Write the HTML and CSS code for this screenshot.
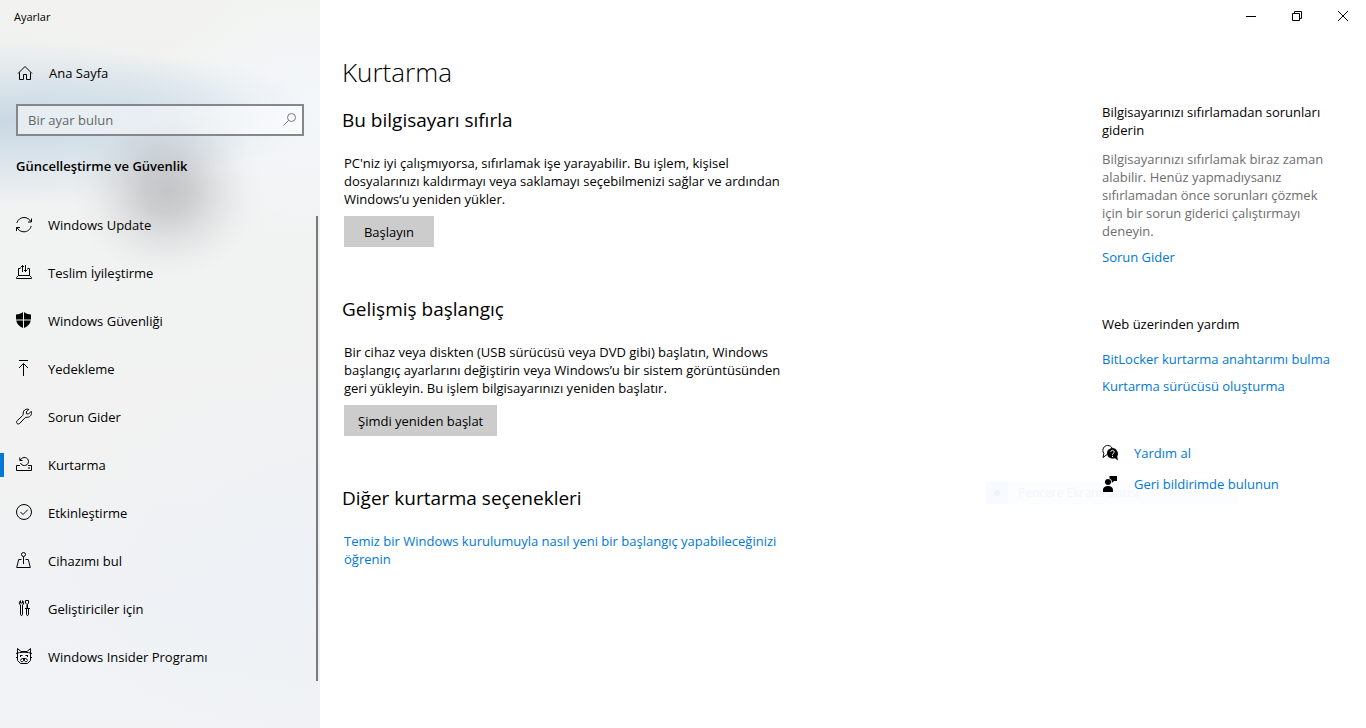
FILE: index.html
```html
<!DOCTYPE html>
<html lang="tr">

<head>
  <meta charset="utf-8">
  <meta name="viewport" content="width=device-width, initial-scale=1">
  <title>Ayarlar</title>
  <link rel="stylesheet" href="styles.css">
</head>

<body>
  <div class="sidebar">
    <div class="app-title">Ayarlar</div>

    <a class="home" href="#">
      <svg class="icon" viewBox="0 0 16 16"><path d="M1 8.5L8 1.5L15 8.5M2.5 7.5V14.5H6.5V9.5H9.5V14.5H13.5V7.5"/></svg>
      Ana Sayfa
    </a>

    <form class="search">
      <input type="text" id="search" aria-label="Bir ayar bulun" placeholder="Bir ayar bulun">
      <svg class="icon" viewBox="0 0 16 16"><circle cx="9.5" cy="5.5" r="4"/><path d="M6.5 8.5L1.5 13.5"/></svg>
    </form>

    <h2 class="group">Güncelleştirme ve Güvenlik</h2>

    <nav class="menu">
      <a href="#">
        <svg class="icon" viewBox="0 0 16 16"><path d="M0.8 6C2 2.3 4.800 0.500 8 0.500C11 0.500 13.600 2 15 4.800M15.500 1.500V5H12M15.200 9C14 13 11.200 14.800 8 14.800C5 14.800 2.400 13.300 1 10.500M0.500 14V10.500H4"/></svg>
        Windows Update
      </a>
      <a href="#">
        <svg class="icon" viewBox="0 0 16 16"><path d="M4.500 3.500H2.500V10.500M11.500 3.500H13.500V10.500M2.500 10.500L0.500 12.500V13.500H15.500V12.500L13.500 10.500H2.500M6.500 7V0.500M4.500 2.500L6.500 0.500L8 2M9.500 0V6.500M8 5L9.500 6.500L11.500 4.500"/></svg>
        Teslim İyileştirme
      </a>
      <a href="#">
        <svg class="icon solid" viewBox="0 0 16 16"><path d="M0 1.500C3 1.400 5.200 0.600 7 -1V6.500H0ZM8 -1C9.800 0.600 12 1.400 15 1.500V6.500H8ZM0.200 7.500H7V15C3.500 13.500 0.800 11 0.200 7.500ZM8 7.500H14.800C14.200 11 11.500 13.500 8 15Z"/></svg>
        Windows Güvenliği
      </a>
      <a href="#">
        <svg class="icon" viewBox="0 0 16 16"><path d="M3 -0.500H12M7.500 15V2.500M3 7L7.500 2.500L12 7"/></svg>
        Yedekleme
      </a>
      <a href="#">
        <svg class="icon" viewBox="0 0 16 16"><path d="M12.800 0.400C10.800 -0.500 7.200 0.800 7.200 4C7.300 5.500 7.200 6 6.500 6.700L1.200 11.700C-0.700 13.700 1.800 16.200 3.800 14.300L8.800 9C9.500 8.300 10 8.200 11.300 8.300C14.500 8.300 16.300 5 15.200 2.300L12.500 5L10.500 4.800L10.300 3Z"/></svg>
        Sorun Gider
      </a>
      <a class="active" href="#">
        <svg class="icon" viewBox="0 0 16 16"><path d="M4 8.500H0.500V13.500H15.500V8.500H12M12 11H14M3.800 0.500V3.500H6.500M4 3.300C7 -1.500 12.500 0.500 12.500 4.500C12.500 7 10.500 8.500 8.500 8.500C6.500 8.500 5 7.500 4.500 6"/></svg>
        Kurtarma
      </a>
      <a href="#">
        <svg class="icon" viewBox="0 0 16 16"><circle cx="8" cy="7" r="7.500"/><path d="M4.500 7L7 9.500L11.800 4.700"/></svg>
        Etkinleştirme
      </a>
      <a href="#">
        <svg class="icon" viewBox="0 0 16 16"><circle cx="7.500" cy="1.500" r="2"/><path d="M7.500 3.500V11M5.500 6.500H2.700L0.700 14.500H14.300L12.300 6.500H9.500"/></svg>
        Cihazımı bul
      </a>
      <a href="#">
        <svg class="icon" viewBox="0 0 16 16"><path d="M4.500 -0.300C2.900 0.500 2.900 3 4.500 4V13.200C4.500 15 6.500 15 6.500 13.200V4C8.100 3 8.100 0.500 6.500 -0.300V2H4.500ZM9.500 -0.500H12.500V2L11.500 3.500V7M11 7V3.500L9.500 2V-0.500M9 7.500H14M10.500 7.500V13.200C10.500 15 12.500 15 12.500 13.200V7.500"/></svg>
        Geliştiriciler için
      </a>
      <a href="#">
        <svg class="icon" viewBox="0 0 16 16"><path d="M1.500 4.500V-0.500L5 2.500H11L14.500 -0.500V4.500M1.500 3.500V11.500L4.500 14.500H11.500L14.500 11.500V3.500M0 4.500C4 2.800 12 2.800 16 4.500M0 8.500H2M14 8.500H16M4 6.500H6.500M9.500 6.500H12M4.500 8V6.500M11.500 8V6.500M6.500 9.500H9.500L8 11ZM8 11C7 13.500 5 13 4.500 11.500C4.500 10.300 5.500 9.800 6.500 9.500M8 11C9 13.500 11 13 11.500 11.500C11.500 10.300 10.500 9.800 9.500 9.500"/></svg>
        Windows Insider Programı
      </a>
      <span class="scrollbar"></span>
    </nav>
  </div>

  <div class="page">
    <div class="window-buttons">
      <button aria-label="Simge durumuna küçült"><svg viewBox="0 0 10 10"><path d="M0 5.500H10"/></svg></button>
      <button aria-label="Önceki boyut"><svg viewBox="0 0 10 10"><path d="M0.500 2.500H7.500V9.500H0.500ZM2.500 2.500V0.500H9.500V7.500H7.500"/></svg></button>
      <button aria-label="Kapat"><svg viewBox="0 0 10 10"><path d="M0 0L10 10M10 0L0 10"/></svg></button>
    </div>

    <div class="content">
      <main>
        <h1>Kurtarma</h1>

        <section>
          <h2>Bu bilgisayarı sıfırla</h2>
          <p>PC'niz iyi çalışmıyorsa, sıfırlamak işe yarayabilir. Bu işlem, kişisel dosyalarınızı kaldırmayı veya saklamayı seçebilmenizi sağlar ve ardından Windows’u yeniden yükler.</p>
          <button class="btn">Başlayın</button>
        </section>

        <section>
          <h2>Gelişmiş başlangıç</h2>
          <p>Bir cihaz veya diskten (USB sürücüsü veya DVD gibi) başlatın, Windows başlangıç ayarlarını değiştirin veya Windows’u bir sistem görüntüsünden geri yükleyin. Bu işlem bilgisayarınızı yeniden başlatır.</p>
          <button class="btn">Şimdi yeniden başlat</button>
        </section>

        <section>
          <h2>Diğer kurtarma seçenekleri</h2>
          <p><a href="#">Temiz bir Windows kurulumuyla nasıl yeni bir başlangıç yapabileceğinizi öğrenin</a></p>
        </section>
      </main>

      <aside>
        <div class="tip">
          <h3>Bilgisayarınızı sıfırlamadan sorunları giderin</h3>
          <p>Bilgisayarınızı sıfırlamak biraz zaman alabilir. Henüz yapmadıysanız sıfırlamadan önce sorunları çözmek için bir sorun giderici çalıştırmayı deneyin.</p>
          <a href="#">Sorun Gider</a>
        </div>

        <div class="web-help">
          <h3>Web üzerinden yardım</h3>
          <a href="#">BitLocker kurtarma anahtarımı bulma</a>
          <a href="#">Kurtarma sürücüsü oluşturma</a>
        </div>

        <div class="support">
          <div class="snip"><span class="snip-icon"></span>Pencere Ekran Alıntısı</div>
          <a href="#">
            <svg class="icon solid" viewBox="0 0 16 16"><path class="line" d="M5 9.500L1 12.500L1.800 8.500C-0.500 4.500 2 0.500 5.500 0.500C8 0.500 9.500 1.500 10 3"/><path d="M10.500 3C7.500 3 5 5.300 5 8.300C5 12.500 9.500 14.500 13 13.200L16 15.500L15.200 11.500C17.500 8 14.500 3 10.500 3Z"/><path class="mark" d="M8.800 7C8.800 4.800 12.200 4.800 12.200 7C12.200 8.300 10.500 8.300 10.500 9.800M10.500 10.800V12"/></svg>
            Yardım al
          </a>
          <a href="#">
            <svg class="icon solid" viewBox="0 0 16 16"><circle cx="6" cy="6" r="3"/><path d="M1 16V14C1 8.800 11 8.800 11 14V16ZM7.500 0H15V5H12L9.800 7V5C9.500 3.800 8.700 3 7.500 2.500Z"/></svg>
            Geri bildirimde bulunun
          </a>
        </div>
      </aside>
    </div>
  </div>
</body>

</html>
```
FILE: styles.css
```css
* {
  box-sizing: border-box;
}

body {
  margin: 0;
  display: flex;
  min-height: 100vh;
  background: #fff;
  color: #000;
  font-family: "Segoe UI", "Open Sans", "Noto Sans", sans-serif;
  font-size: 13px;
  line-height: 18px;
}

h1, h2, h3, p {
  margin: 0;
  font-weight: 400;
}

h3 {
  font-size: 13px;
}

a {
  color: #0078d7;
  text-decoration: none;
}

button, input {
  font: inherit;
  color: inherit;
}

.icon {
  width: 16px;
  height: 16px;
  flex: none;
  fill: none;
  stroke: #000;
  overflow: visible;
}

.icon.solid {
  fill: #000;
  stroke: none;
}

.icon .line {
  fill: none;
  stroke: #000;
}

.icon .mark {
  fill: none;
  stroke: #fff;
}

/* left panel */

.sidebar {
  width: 320px;
  flex: none;
  background:
    radial-gradient(ellipse 95px 90px at 167px 190px, rgba(160, 161, 165, 0.55), rgba(160, 161, 165, 0.45) 25%, rgba(160, 161, 165, 0.2) 55%, rgba(160, 161, 165, 0.05) 80%, transparent),
    radial-gradient(ellipse 260px 85px at 0 122px, rgba(180, 203, 220, 0.65), rgba(185, 207, 223, 0.35) 50%, transparent),
    radial-gradient(ellipse 170px 60px at 150px 115px, rgba(200, 217, 231, 0.5), transparent),
    radial-gradient(ellipse 150px 130px at 300px 110px, rgba(244, 248, 252, 0.9), transparent),
    radial-gradient(ellipse 280px 200px at 320px 560px, rgba(234, 241, 247, 0.6), transparent),
    linear-gradient(#f2f3ef, #f1f2f2 100px, #f2f2f2 480px, #f0f2f5 600px, #f1f3f5);
}

.app-title {
  padding: 8px 14px;
  font-size: 11px;
}

.home {
  display: flex;
  align-items: center;
  gap: 16px;
  height: 40px;
  margin: 19px 17px 11px;
  color: #000;
}

.search {
  display: flex;
  align-items: center;
  margin: 0 16px;
  height: 32px;
  padding: 0 4px 0 10px;
  border: 2px solid #858789;
  background: rgba(255, 255, 255, 0.5);
}

.search input {
  flex: 1;
  min-width: 0;
  padding: 0;
  border: 0;
  outline: 0;
  background: none;
}

.search input::placeholder {
  color: #666;
  opacity: 1;
}

.search .icon {
  stroke: #777;
}

.group {
  margin: 21px 16px 26px;
  font-size: 13px;
  font-weight: 600;
}

.menu {
  position: relative;
}

.menu a {
  display: flex;
  align-items: center;
  gap: 16px;
  height: 48px;
  padding: 0 16px;
  color: #000;
}

.menu .active {
  padding-left: 12px;
}

.menu .active::before {
  content: "";
  width: 4px;
  height: 24px;
  margin: 0 -4px 0 -12px;
  background: #0078d7;
}

.scrollbar {
  position: absolute;
  top: 15px;
  right: 2px;
  bottom: 0;
  width: 2px;
  background: #7a7a7a;
}

/* right side */

.page {
  flex: 1;
  min-width: 0;
}

.window-buttons {
  display: flex;
  justify-content: flex-end;
}

.window-buttons button {
  display: flex;
  align-items: center;
  justify-content: center;
  width: 46px;
  height: 32px;
  padding: 0;
  border: 0;
  background: none;
}

.window-buttons svg {
  width: 10px;
  height: 10px;
  fill: none;
  stroke: #000;
}

.content {
  display: flex;
  justify-content: space-between;
  gap: 32px;
  padding: 20px 32px 32px 24px;
}

main {
  max-width: 452px;
}

h1 {
  margin: 0 0 14px -2px;
  font-size: 26px;
  font-weight: 300;
  line-height: 40px;
}

section {
  margin-bottom: 48px;
}

section h2 {
  margin: 0 0 20px -2px;
  font-size: 19px;
  line-height: 28px;
}

.btn {
  display: block;
  height: 31px;
  min-width: 90px;
  margin-top: 8px;
  padding: 0 14px;
  border: 0;
  background: #ccc;
}

aside {
  width: 232px;
  flex: none;
  padding-top: 51px;
}

aside a {
  display: block;
}

.tip p {
  margin: 11px 0 8px;
  color: #6d6d6d;
}

.web-help {
  margin-top: 49px;
}

.web-help h3 {
  margin-bottom: 17px;
}

.web-help a {
  margin-bottom: 9px;
  white-space: nowrap;
}

.support {
  position: relative;
  margin-top: 42px;
}

.support a {
  position: relative;
  display: flex;
  align-items: center;
  gap: 16px;
  height: 31px;
}

/* faded snip label lying under the feedback link */
.snip {
  position: absolute;
  left: -116px;
  top: 45px;
  display: flex;
  align-items: center;
  gap: 10px;
  width: 252px;
  height: 22px;
  background: #fbfdff;
  color: #f3f5f7;
  font-size: 12px;
}

.snip-icon {
  display: flex;
  align-items: center;
  justify-content: center;
  width: 22px;
  height: 22px;
  background: #f7fbff;
}

.snip-icon::before {
  content: "";
  width: 6px;
  height: 6px;
  border-radius: 50%;
  background: #eff3f7;
}
```
